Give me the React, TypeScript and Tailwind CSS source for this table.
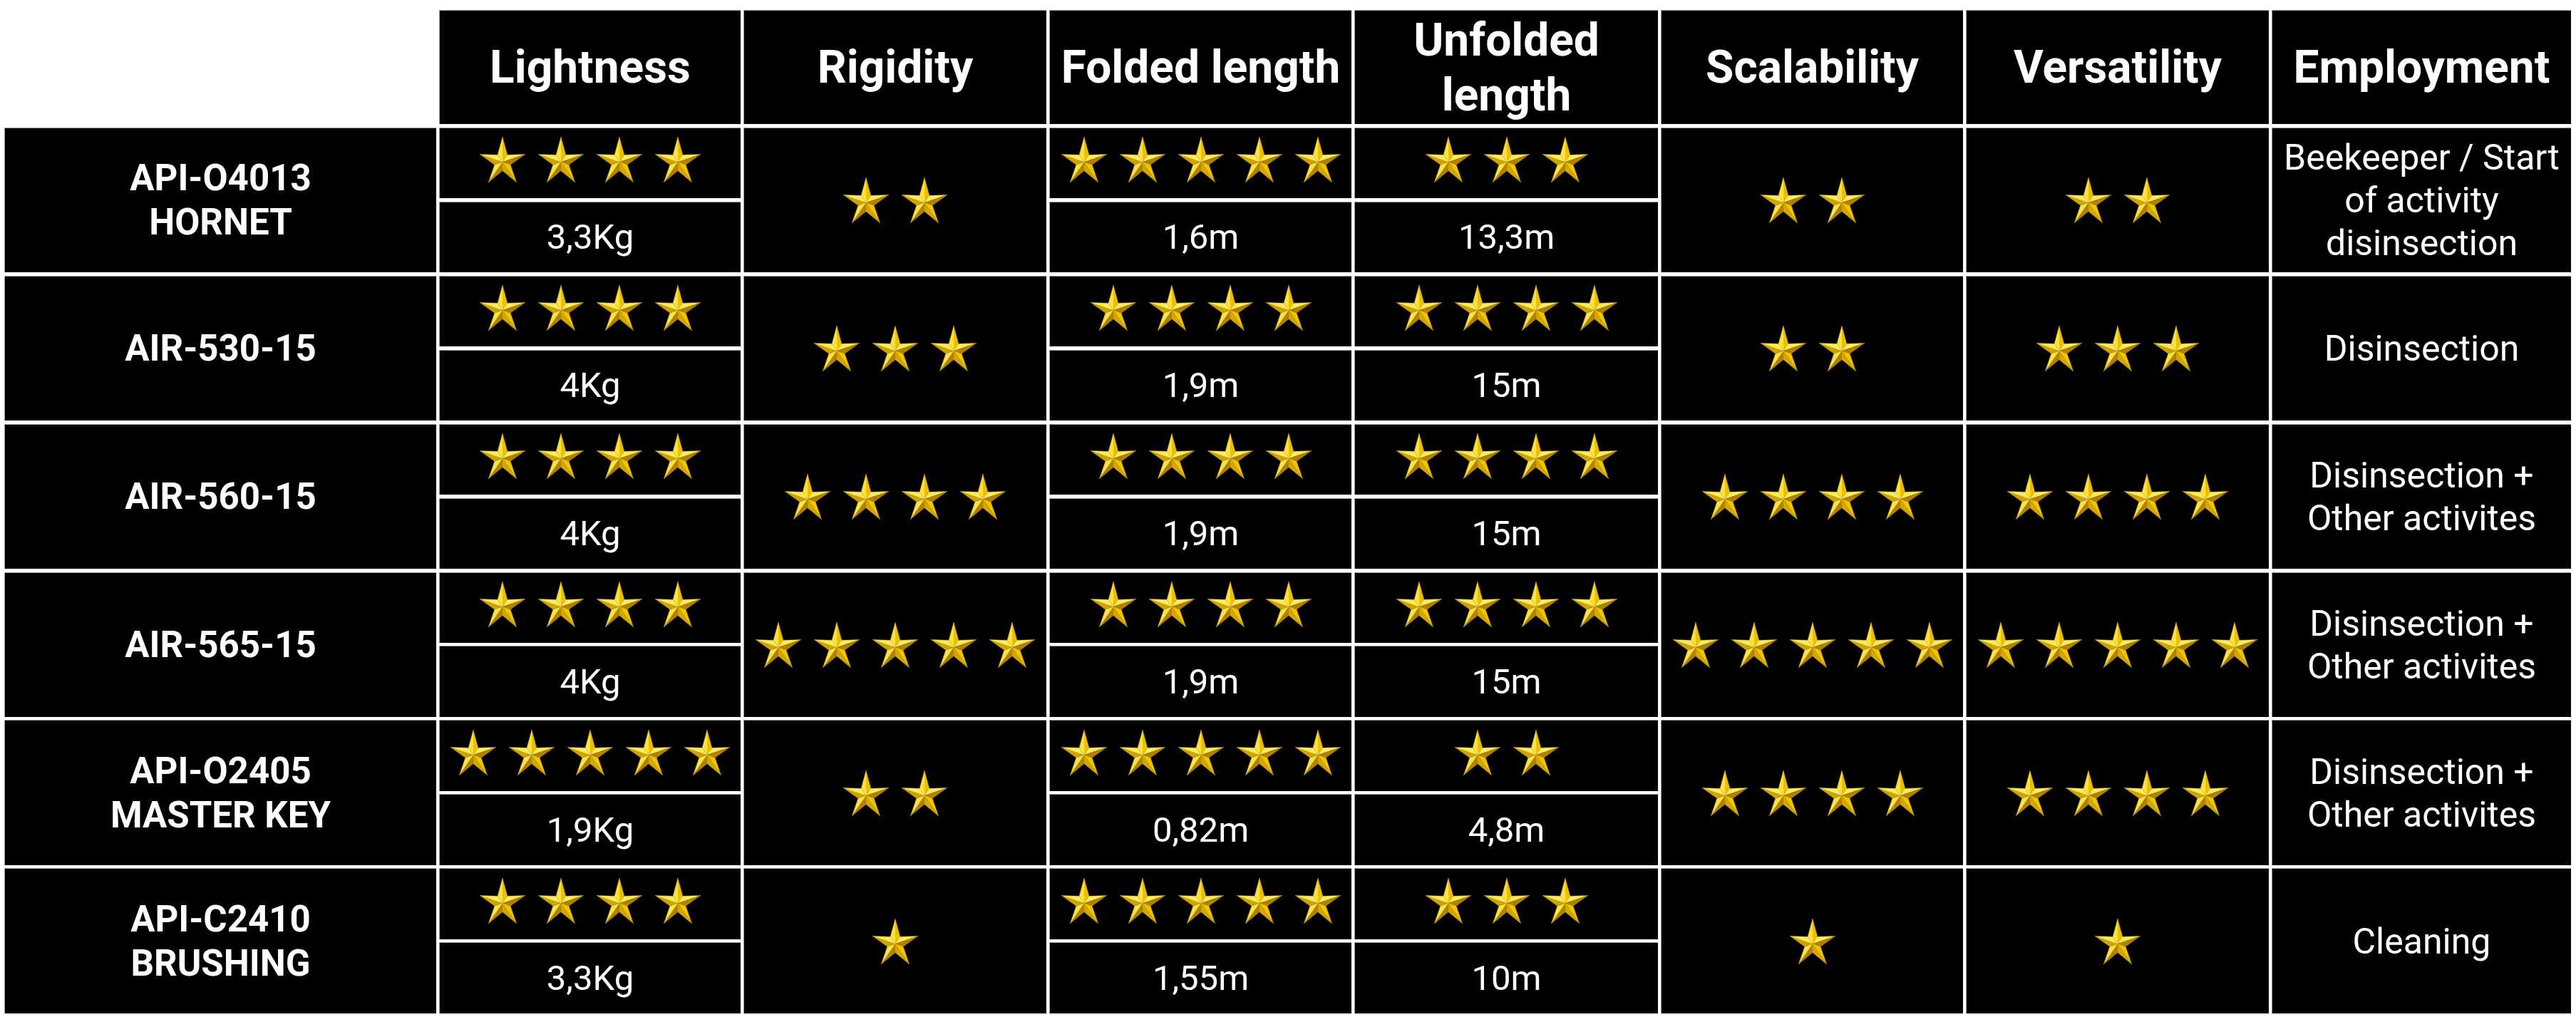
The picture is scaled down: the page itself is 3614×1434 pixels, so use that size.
import { ReactNode } from 'react'

interface Row {
  name: string[]
  lightness: [number, string]
  rigidity: number
  folded: [number, string]
  unfolded: [number, string]
  scalability: number
  versatility: number
  employment: string
}

const rows: Row[] = [
  {
    name: ['API-O4013', 'HORNET'],
    lightness: [4, '3,3Kg'],
    rigidity: 2,
    folded: [5, '1,6m'],
    unfolded: [3, '13,3m'],
    scalability: 2,
    versatility: 2,
    employment: 'Beekeeper / Start of activity disinsection',
  },
  {
    name: ['AIR-530-15'],
    lightness: [4, '4Kg'],
    rigidity: 3,
    folded: [4, '1,9m'],
    unfolded: [4, '15m'],
    scalability: 2,
    versatility: 3,
    employment: 'Disinsection',
  },
  {
    name: ['AIR-560-15'],
    lightness: [4, '4Kg'],
    rigidity: 4,
    folded: [4, '1,9m'],
    unfolded: [4, '15m'],
    scalability: 4,
    versatility: 4,
    employment: 'Disinsection + Other activites',
  },
  {
    name: ['AIR-565-15'],
    lightness: [4, '4Kg'],
    rigidity: 5,
    folded: [4, '1,9m'],
    unfolded: [4, '15m'],
    scalability: 5,
    versatility: 5,
    employment: 'Disinsection + Other activites',
  },
  {
    name: ['API-O2405', 'MASTER KEY'],
    lightness: [5, '1,9Kg'],
    rigidity: 2,
    folded: [5, '0,82m'],
    unfolded: [2, '4,8m'],
    scalability: 4,
    versatility: 4,
    employment: 'Disinsection + Other activites',
  },
  {
    name: ['API-C2410', 'BRUSHING'],
    lightness: [4, '3,3Kg'],
    rigidity: 1,
    folded: [5, '1,55m'],
    unfolded: [3, '10m'],
    scalability: 1,
    versatility: 1,
    employment: 'Cleaning',
  },
]

// beveled gold star, facets shaded against a light from the top left
const OUTER = 50
const INNER = 17.5
const starPoints = Array.from({ length: 10 }, (_, i) => {
  const a = ((-90 + i * 36) * Math.PI) / 180
  const rad = i % 2 === 0 ? OUTER : INNER
  return [rad * Math.cos(a), rad * Math.sin(a)]
})

const mix = (a: number[], b: number[], t: number) =>
  `rgb(${a.map((v, i) => Math.round(v + (b[i] - v) * t)).join(',')})`

const DARK = [176, 128, 0]
const MID = [246, 202, 0]
const LIGHT = [255, 238, 105]

const lightDir = (() => {
  const x = -0.45
  const y = -1
  const l = Math.hypot(x, y)
  return [x / l, y / l]
})()

const facets = starPoints.map((p1, i) => {
  const p2 = starPoints[(i + 1) % 10]
  const ex = p2[0] - p1[0]
  const ey = p2[1] - p1[1]
  let nx = ey
  let ny = -ex
  const mx = (p1[0] + p2[0]) / 2
  const my = (p1[1] + p2[1]) / 2
  if (nx * mx + ny * my < 0) {
    nx = -nx
    ny = -ny
  }
  const l = Math.hypot(nx, ny)
  const t = (nx / l) * lightDir[0] + (ny / l) * lightDir[1]
  const fill = t >= 0 ? mix(MID, LIGHT, t) : mix(MID, DARK, -t)
  return { d: `0,0 ${p1.join(',')} ${p2.join(',')}`, fill }
})

function Star() {
  return (
    <svg
      width={64}
      height={64}
      viewBox="-47.6 -50 95.2 90.5"
      preserveAspectRatio="none"
      className="shrink-0"
    >
      {facets.map((f, i) => (
        <polygon key={i} points={f.d} fill={f.fill} stroke={f.fill} strokeWidth={0.3} />
      ))}
      <polygon
        points={starPoints.map((p) => p.join(',')).join(' ')}
        fill="none"
        stroke="#946c00"
        strokeWidth={0.5}
      />
    </svg>
  )
}

function Stars({ count }: { count: number }) {
  return (
    <div className="flex gap-[18px]">
      {Array.from({ length: count }, (_, i) => (
        <Star key={i} />
      ))}
    </div>
  )
}

function Cell({ children, span, className }: { children?: ReactNode; span?: boolean; className?: string }) {
  return (
    <div
      className={`flex items-center justify-center border-l border-t border-[#9a9a9a] bg-black text-center text-white ${
        span ? 'row-span-2' : ''
      } ${className ?? ''}`}
    >
      {children}
    </div>
  )
}

const headers = ['Lightness', 'Rigidity', 'Folded length', 'Unfolded\nlength', 'Scalability', 'Versatility', 'Employment']

export default function App() {
  return (
    <div className="min-h-screen bg-white pl-[6px] pt-[14px] font-[Roboto,sans-serif]">
      <div className="grid w-max grid-cols-[606px_423px_425px_424px_426px_424px_425px_420px] grid-rows-[160px_repeat(12,99.4px)] gap-x-[4px] gap-y-[4.6px]">
        <div />
        {headers.map((h) => (
          <Cell key={h} className="whitespace-pre-line px-[2px] text-[64px] font-bold leading-[77px]">
            {h}
          </Cell>
        ))}
        {rows.map((row) => [
          <Cell key={row.name[0] + 'n'} span className="flex-col text-[51px] font-bold leading-[62px]">
            {row.name.map((line) => (
              <div key={line}>{line}</div>
            ))}
          </Cell>,
          <Cell key={row.name[0] + 'l'} className="pb-[9px]">
            <Stars count={row.lightness[0]} />
          </Cell>,
          <Cell key={row.name[0] + 'r'} span>
            <Stars count={row.rigidity} />
          </Cell>,
          <Cell key={row.name[0] + 'f'} className="pb-[9px]">
            <Stars count={row.folded[0]} />
          </Cell>,
          <Cell key={row.name[0] + 'u'} className="pb-[9px]">
            <Stars count={row.unfolded[0]} />
          </Cell>,
          <Cell key={row.name[0] + 's'} span>
            <Stars count={row.scalability} />
          </Cell>,
          <Cell key={row.name[0] + 'v'} span>
            <Stars count={row.versatility} />
          </Cell>,
          <Cell key={row.name[0] + 'e'} span className="px-[4px] text-[50px] leading-[60px]">
            {row.employment}
          </Cell>,
          <Cell key={row.name[0] + 'lv'} className="text-[49px]">
            {row.lightness[1]}
          </Cell>,
          <Cell key={row.name[0] + 'fv'} className="text-[49px]">
            {row.folded[1]}
          </Cell>,
          <Cell key={row.name[0] + 'uv'} className="text-[49px]">
            {row.unfolded[1]}
          </Cell>,
        ])}
      </div>
    </div>
  )
}
